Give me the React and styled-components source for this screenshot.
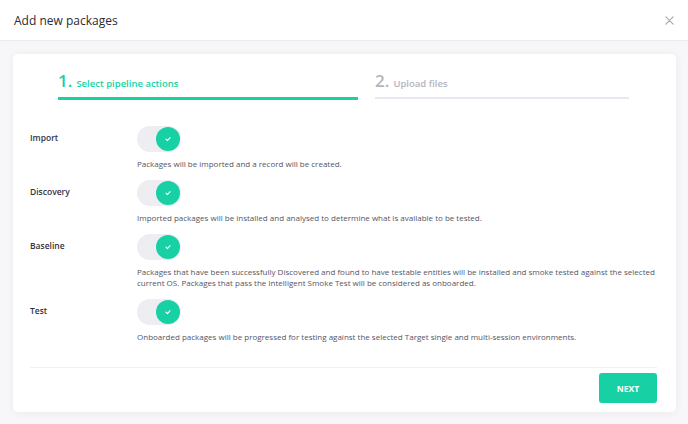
import React, { useState } from 'react';
import styled, { createGlobalStyle } from 'styled-components';

const GlobalStyle = createGlobalStyle`
  html, body {
    margin: 0;
    padding: 0;
    background: #f7f7f9;
  }
  body {
    font-family: 'Open Sans', 'Noto Sans', sans-serif;
    color: #2d2d3a;
  }
  * {
    box-sizing: border-box;
  }
`;

const GREEN = '#17d1a5';

const actions = [
  {
    name: 'Import',
    text: 'Packages will be imported and a record will be created.',
  },
  {
    name: 'Discovery',
    text: 'Imported packages will be installed and analysed to determine what is available to be tested.',
  },
  {
    name: 'Baseline',
    text: 'Packages that have been successfully Discovered and found to have testable entities will be installed and smoke tested against the selected current OS. Packages that pass the Intelligent Smoke Test will be considered as onboarded.',
  },
  {
    name: 'Test',
    text: 'Onboarded packages will be progressed for testing against the selected Target single and multi-session environments.',
  },
];

const Modal = () => {
  const [enabled, setEnabled] = useState(actions.map(() => true));

  const toggle = (i) =>
    setEnabled((prev) => prev.map((v, idx) => (idx === i ? !v : v)));

  return (
    <Wrapper>
      <Header>
        <Title>Add new packages</Title>
        <CloseButton type='button' aria-label='close'>
          <svg width='9' height='9' viewBox='0 0 10 10'>
            <path d='M1 1L9 9M9 1L1 9' stroke='#a9a9b3' strokeWidth='1.3' strokeLinecap='round' />
          </svg>
        </CloseButton>
      </Header>
      <Body>
        <Card>
          <Steps>
            <Step $active>
              <StepLabel $active>
                <StepNumber>1.</StepNumber>
                Select pipeline actions
              </StepLabel>
            </Step>
            <Step>
              <StepLabel>
                <StepNumber>2.</StepNumber>
                Upload files
              </StepLabel>
            </Step>
          </Steps>

          <List>
            {actions.map((action, i) => (
              <Row key={action.name}>
                <Label>{action.name}</Label>
                <div>
                  <Switch
                    type='button'
                    $on={enabled[i]}
                    onClick={() => toggle(i)}
                  >
                    <Knob $on={enabled[i]}>
                      <svg width='8' height='8' viewBox='0 0 10 10'>
                        <path
                          d='M2.5 5.2L4.3 7L7.6 3.4'
                          fill='none'
                          stroke='#fff'
                          strokeWidth='1.4'
                          strokeLinecap='round'
                          strokeLinejoin='round'
                        />
                      </svg>
                    </Knob>
                  </Switch>
                  <Description>{action.text}</Description>
                </div>
              </Row>
            ))}
          </List>

          <Footer>
            <NextButton type='button'>NEXT</NextButton>
          </Footer>
        </Card>
      </Body>
    </Wrapper>
  );
};

export default function App() {
  return (
    <>
      <GlobalStyle />
      <Modal />
    </>
  );
}

const Wrapper = styled.div`
  width: 688px;
  height: 424px;
  display: flex;
  flex-direction: column;
  background: #f7f7f9;
  overflow: hidden;
`;

const Header = styled.header`
  height: 41px;
  flex-shrink: 0;
  display: flex;
  align-items: center;
  justify-content: space-between;
  padding: 0 12px 0 14px;
  background: #fff;
  border-bottom: 1px solid #ececef;
`;

const Title = styled.h1`
  margin: 0;
  font-size: 12px;
  font-weight: 500;
  color: #2b2b38;
`;

const CloseButton = styled.button`
  display: flex;
  align-items: center;
  justify-content: center;
  width: 14px;
  height: 14px;
  padding: 0;
  border: none;
  background: transparent;
  cursor: pointer;
`;

const Body = styled.div`
  flex: 1;
  padding: 13px 12px 13px 13px;
`;

const Card = styled.div`
  background: #fff;
  border-radius: 5px;
  box-shadow: 0 1px 8px rgba(30, 30, 60, 0.06);
  padding: 17px 19px 9px 17px;
  height: 358px;
  display: flex;
  flex-direction: column;
`;

const Steps = styled.div`
  display: grid;
  grid-template-columns: 300px 254px;
  column-gap: 17px;
  padding-left: 28px;
`;

const Step = styled.div`
  padding-bottom: 6px;
  border-bottom: ${(p) => (p.$active ? `3px solid ${GREEN}` : '2px solid #e8e9f0')};
  margin-bottom: ${(p) => (p.$active ? '0' : '1px')};
`;

const StepLabel = styled.div`
  display: flex;
  align-items: baseline;
  gap: 4px;
  font-size: 9.5px;
  font-weight: 600;
  color: ${(p) => (p.$active ? GREEN : '#b4b4be')};
`;

const StepNumber = styled.span`
  font-size: 17px;
  font-weight: 600;
  line-height: 20px;
`;

const List = styled.div`
  display: flex;
  flex-direction: column;
  gap: 11px;
  padding-top: 26px;
  flex: 1;
`;

const Row = styled.div`
  display: grid;
  grid-template-columns: 107px 1fr;
`;

const Label = styled.div`
  font-size: 8.5px;
  font-weight: 600;
  color: #33333f;
  padding-top: 6px;
`;

const Switch = styled.button`
  display: flex;
  align-items: center;
  justify-content: ${(p) => (p.$on ? 'flex-end' : 'flex-start')};
  width: 44px;
  height: 26px;
  padding: 1px;
  border: none;
  border-radius: 13px;
  background: #ededf2;
  cursor: pointer;
`;

const Knob = styled.span`
  display: flex;
  align-items: center;
  justify-content: center;
  width: 24px;
  height: 24px;
  border-radius: 50%;
  background: ${(p) => (p.$on ? GREEN : '#c9c9d2')};
`;

const Description = styled.p`
  margin: 6px 0 0;
  font-size: 8px;
  line-height: 11px;
  color: #55555f;
  max-width: 520px;
`;

const Footer = styled.div`
  display: flex;
  justify-content: flex-end;
  padding-top: 5px;
  border-top: 1px solid #f0f0f3;
`;

const NextButton = styled.button`
  width: 58px;
  height: 30px;
  border: none;
  border-radius: 3px;
  background: ${GREEN};
  color: #fff;
  font-family: inherit;
  font-size: 8.5px;
  font-weight: 700;
  cursor: pointer;
`;
